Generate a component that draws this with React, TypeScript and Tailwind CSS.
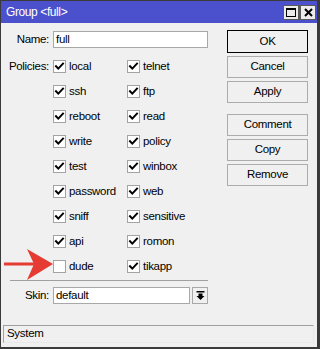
import React from "react";

const Check = ({ checked }: { checked: boolean }) => (
  <div className="w-[13px] h-[13px] border border-[#a3a3a3] bg-white flex items-center justify-center shrink-0">
    {checked && (
      <svg width="11" height="11" viewBox="0 0 11 11">
        <path d="M2 5.2 L4.3 7.6 L9 2.6" fill="none" stroke="#000" strokeWidth="2" strokeLinecap="square" />
      </svg>
    )}
  </div>
);

const Item = ({ label, checked = true }: { label: string; checked?: boolean }) => (
  <div className="h-[25px] flex items-center gap-[3px]">
    <Check checked={checked} />
    <span>{label}</span>
  </div>
);

const Btn = ({ label, def = false }: { label: string; def?: boolean }) => (
  <div
    className={
      "w-[81px] flex items-center justify-center bg-[#f0f0f0] border " +
      (def ? "h-[23px] border-[#000]" : "h-[22px] border-[#acacac]")
    }
  >
    {label}
  </div>
);

const rows: [string, string, boolean?][] = [
  ["local", "telnet"],
  ["ssh", "ftp"],
  ["reboot", "read"],
  ["write", "policy"],
  ["test", "winbox"],
  ["password", "web"],
  ["sniff", "sensitive"],
  ["api", "romon"],
  ["dude", "tikapp", false],
];

export default function App() {
  return (
    <div
      className="w-[320px] h-[349px] bg-[#3a3a3a] pt-px pl-px pr-[3px] pb-[2px] relative"
      style={{ fontFamily: '"Liberation Sans", Arial, sans-serif' }}
    >
      <div className="w-full h-full bg-[#f0f0f0] flex flex-col text-[11.5px] tracking-[-0.3px] text-black">
        <div className="h-[22px] shrink-0 bg-[#4b50cc] flex items-center pl-[5px] pr-[1px] text-white text-[12px] tracking-[-0.4px]">
          <span>Group &lt;full&gt;</span>
          <div className="ml-auto flex gap-[1px]">
            <div className="w-[16px] h-[15px] bg-[#ececec] border border-[#5a5a5a] flex items-center justify-center">
              <svg width="10" height="9" viewBox="0 0 10 9">
                <rect x="0.5" y="0.5" width="9" height="8" fill="none" stroke="#000" strokeWidth="1" />
                <rect x="0" y="0" width="10" height="2" fill="#000" />
              </svg>
            </div>
            <div className="w-[16px] h-[15px] bg-[#ececec] border border-[#5a5a5a] flex items-center justify-center">
              <svg width="9" height="9" viewBox="0 0 9 9">
                <path d="M1 1 L8 8 M8 1 L1 8" stroke="#000" strokeWidth="2" />
              </svg>
            </div>
          </div>
        </div>

        <div className="flex flex-1">
          <div className="w-[216px] pt-[8px] flex flex-col">
            <div className="flex items-center h-[17px]">
              <span className="w-[48px] text-right">Name:</span>
              <div className="ml-[4px] w-[155px] h-[17px] bg-white border border-[#a8a8a8] flex items-center pl-[2px]">
                full
              </div>
            </div>
            <div className="flex mt-[6px]">
              <div className="w-[48px] h-[25px] flex items-center justify-end">Policies:</div>
              <div className="ml-[4px] grid grid-cols-[74px_80px]">
                {rows.map(([a, b, c]) => (
                  <React.Fragment key={a}>
                    <Item label={a} checked={c !== false} />
                    <Item label={b} />
                  </React.Fragment>
                ))}
              </div>
            </div>
            <div className="ml-[9px] w-[198px] h-px bg-[#a0a0a0] mt-px"></div>
            <div className="flex items-center mt-[6px]">
              <span className="w-[48px] text-right">Skin:</span>
              <div className="ml-[4px] w-[137px] h-[17px] bg-white border border-[#a8a8a8] flex items-center pl-[2px]">
                default
              </div>
              <div className="ml-[2px] w-[16px] h-[17px] bg-[#f0f0f0] border border-[#a8a8a8] flex items-center justify-center">
                <svg width="9" height="9" viewBox="0 0 9 9">
                  <rect x="0.5" y="0" width="8" height="1.5" fill="#000" />
                  <path d="M2.5 2.5 H6.5 V5 H8.5 L4.5 9 L0.5 5 H2.5 Z" fill="#000" />
                </svg>
              </div>
            </div>
          </div>
          <div className="ml-[10px] pt-[7px] flex flex-col">
            <Btn label="OK" def />
            <div className="mt-[3px] flex flex-col gap-[3px]">
              <Btn label="Cancel" />
              <Btn label="Apply" />
            </div>
            <div className="mt-[11px] flex flex-col gap-[3px]">
              <Btn label="Comment" />
              <Btn label="Copy" />
              <Btn label="Remove" />
            </div>
          </div>
        </div>

        <div className="ml-[2px] mb-[4px] w-[311px] h-[18px] border-t border-l border-[#a0a0a0] border-b border-b-[#e8e8e8] border-r border-r-[#e8e8e8] flex items-center pl-[3px]">
          System
        </div>
      </div>

      <svg className="absolute left-0 top-0 pointer-events-none" width="60" height="290" viewBox="0 0 60 290">
        <path d="M4 262.5 H34 V265.5 H4 Z" fill="#e53b32" />
        <path d="M53 264 L27 249 L34 264 L27 280 Z" fill="#e53b32" />
      </svg>
    </div>
  );
}
